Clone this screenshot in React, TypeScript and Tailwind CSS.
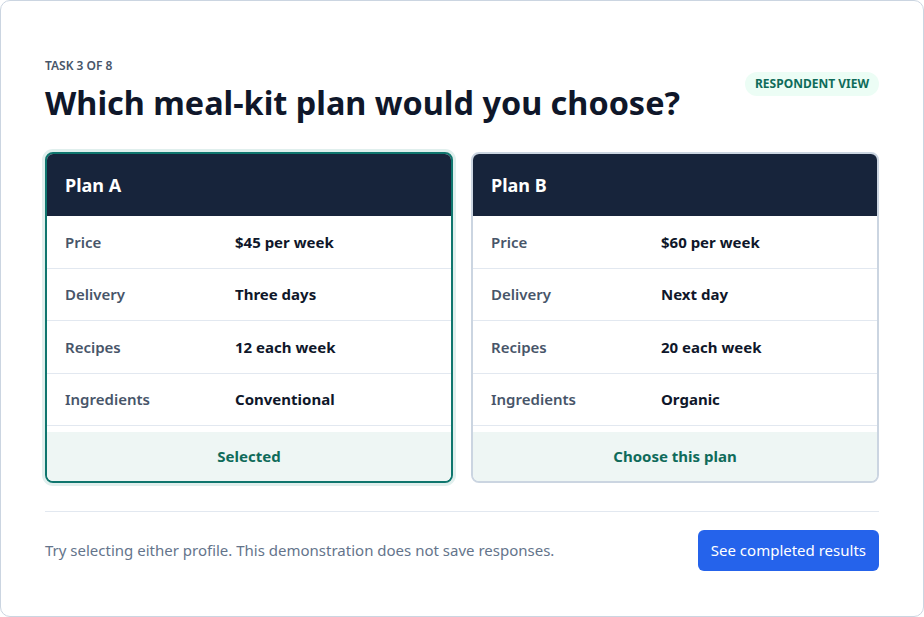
const plans = [
  {
    name: "Plan A",
    selected: true,
    rows: [
      ["Price", "$45 per week"],
      ["Delivery", "Three days"],
      ["Recipes", "12 each week"],
      ["Ingredients", "Conventional"],
    ],
  },
  {
    name: "Plan B",
    selected: false,
    rows: [
      ["Price", "$60 per week"],
      ["Delivery", "Next day"],
      ["Recipes", "20 each week"],
      ["Ingredients", "Organic"],
    ],
  },
];

const PlanCard = ({ plan }: { plan: (typeof plans)[number] }) => {
  return (
    <div
      className={
        plan.selected
          ? "flex flex-col overflow-hidden rounded-lg border-2 border-[#0f766e] bg-white shadow-[0_0_0_3px_#e0efed]"
          : "flex flex-col overflow-hidden rounded-lg border-2 border-[#cbd5e1] bg-white"
      }
    >
      <div className="flex h-[62px] items-center bg-[#17243b] px-[18px] text-[18px] font-bold text-white">
        {plan.name}
      </div>
      <div className="flex flex-col">
        {plan.rows.map(([label, value]) => (
          <div key={label} className="flex h-[52.5px] items-center border-b border-[#e2e8f0] px-[18px] text-[15px]">
            <div className="w-[170px] font-semibold text-[#475569]">{label}</div>
            <div className="font-bold text-[#0f172a]">{value}</div>
          </div>
        ))}
      </div>
      <div className="mt-[6px] flex h-[49px] items-center justify-center bg-[#eef6f4] text-[15px] font-bold text-[#0f6b5a]">
        {plan.selected ? "Selected" : "Choose this plan"}
      </div>
    </div>
  );
};

export default function App() {
  return (
    <div
      className="h-[617px] w-[924px] bg-white"
      style={{ fontFamily: '"Noto Sans", "Open Sans", sans-serif' }}
    >
      <div className="flex h-full flex-col rounded-[10px] border border-[#cbd5e1] px-[44px] pt-[57px]">
        <div className="flex items-start justify-between">
          <div>
            <div className="text-[12px] font-semibold uppercase leading-4 text-[#475569]">Task 3 of 8</div>
            <h1 className="mt-[7px] text-[32.4px] font-bold leading-[42px] text-[#0f172a]">
              Which meal-kit plan would you choose?
            </h1>
          </div>
          <div className="mt-[14px] rounded-full bg-[#ecfdf5] px-[10px] py-[4px] text-[12px] font-bold uppercase leading-4 text-[#0f6b5a]">
            Respondent view
          </div>
        </div>
        <div className="mt-[29px] grid grid-cols-2 gap-[18px]">
          {plans.map((p) => (
            <PlanCard key={p.name} plan={p} />
          ))}
        </div>
        <div className="mt-[28px] flex items-center justify-between border-t border-[#e2e8f0] pt-[18px]">
          <p className="text-[15px] text-[#64748b]">
            Try selecting either profile. This demonstration does not save responses.
          </p>
          <button className="h-[41px] rounded-md bg-[#2563eb] px-[13px] text-[15px] text-white">
            See completed results
          </button>
        </div>
      </div>
    </div>
  );
}
